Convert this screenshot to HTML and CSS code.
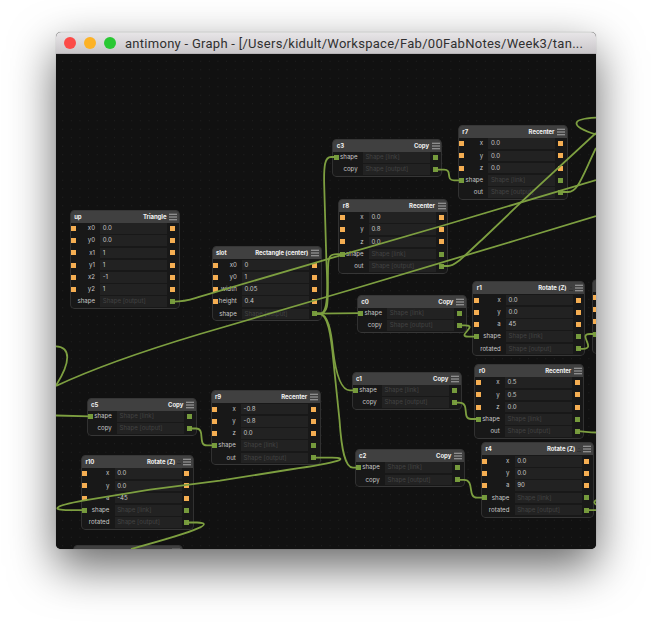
FILE: index.html
```html
<!DOCTYPE html>
<html lang="en">
<head>
<meta charset="utf-8">
<title>antimony - Graph</title>
<link rel="stylesheet" href="styles.css">
</head>
<body>
<main class="window">
  <header class="titlebar">
    <span class="light red"></span><span class="light yellow"></span><span class="light green"></span>
    <h1 class="title">antimony - Graph - [/Users/kidult/Workspace/Fab/00FabNotes/Week3/tan...</h1>
  </header>
  <section class="canvas" id="canvas">
    <svg class="wires" viewBox="56 54 540 495" width="540" height="495">
      <path d="M172.5 301.7C185 302 192 299 200 296.7L320 261.3L450 223.5L596 180"/>
      <path d="M56 386C90 370 140 352 200 334L350 290L517 240L596 216"/>
      <path d="M56 346.3C71 347 71 362 56 385.5"/>
      <path d="M560.3 192H568C578 192 582 177 596 148"/>
      <path d="M596 117.7C570 119 570 126 596 134.5"/>
      <path d="M440.7 266H448C456 266 467 253 481.7 240L521.7 201.7L596 133"/>
      <path d="M434.8 169.6H444C453 169.6 445 180.3 454 180.3H461.3"/>
      <path d="M314.8 313.7H320C328 313.7 328 292 326.3 258L324.2 185C323.7 165 325 157 331 157H335.5"/>
      <path d="M314.8 313.7H319C330 313.7 327.5 300 328 270C328 256 330 254.2 337 254.2H341.5"/>
      <path d="M314.8 313.7L360 313.2"/>
      <path d="M314.8 313.7H319C328 314 331 330 333 350C336 375 341 390.4 350 390.4H354.7"/>
      <path d="M314.8 313.7H319C328 314 331 335 333.5 362L339.5 420C341.5 450 345 467.7 353 467.7H357.7"/>
      <path d="M459.3 325.3H465C479 325.3 456 336.6 468 336.6H475.5"/>
      <path d="M577.8 348.8H583C597 348.8 577 334 590 334H595"/>
      <path d="M454 402.7H459C471 402.7 461 419 471 419H478"/>
      <path d="M577 431.2C584 431.2 588 432.5 596 432.5"/>
      <path d="M457 479.8H464C475 479.8 467 497.7 477 497.7H484.3"/>
      <path d="M586.5 510.2H596M597 500C593 501 594 504 597 505"/>
      <path d="M56 415.5L89.8 416.3"/>
      <path d="M189 428.5H196C206 428.5 197 445.4 207 445.4H213.8"/>
      <path d="M313 457.7H332C349 458 343 462 290 469.5L220 480.7L150 489.7L83 500.7C54 506 50 510 69 510.2H84"/>
      <path d="M186.3 522.5H197C213 523 205 529 131 549"/>
    </svg>
  </section>
</main>
<script src="graph.js"></script>
</body>
</html>
```
FILE: styles.css
```css
* { box-sizing: border-box; }
body { margin: 0; background: #fff; height: 629px; overflow: hidden; font-family: Inter, "Liberation Sans", sans-serif; }
.window { width: 540px; height: 517px; margin: 32px 0 0 56px; display: flow-root; border-radius: 5px; overflow: hidden; background: #111; box-shadow: 0 0 1px rgba(0,0,0,.4), 0 18px 46px rgba(0,0,0,.6); }
.titlebar { height: 22px; display: flex; align-items: center; padding-left: 8px; background: linear-gradient(#e7e5e7, #cac7ca); border-top: 1px solid #d9dad9; border-bottom: 1px solid #b5b2b5; }
.light { width: 12px; height: 12px; border-radius: 50%; margin-right: 8px; flex: none; }
.red { background: #fc4b48; }
.yellow { background: #fdb226; }
.green { background: #29c833; }
.title { margin: 2px 0 0 1px; font: 400 13px/20px Roboto, Inter, sans-serif; color: #303030; white-space: nowrap; letter-spacing: .28px; }
.canvas { position: relative; height: 495px; overflow: hidden; background: #111 radial-gradient(circle at 50% 50%, #222 0, #1d1d1d .5px, transparent .9px) 2.4px 3px / 8.63px 8.5px; }
.wires { position: absolute; inset: 0; z-index: 2; fill: none; stroke: #7d9f40; stroke-width: 1.8; }
.node { position: absolute; width: 108px; border-radius: 3.5px; background: #181818; box-shadow: 0 0 0 .9px #363636; padding-bottom: .3px; }
.node.wide { width: 111px; }
.head { height: 12px; padding: 0 1.8px 0 3.5px; display: flex; align-items: center; background: #404040; border-radius: 3px 3px 0 0; color: #f0f0f0; font-size: 6px; line-height: 12px; font-weight: 700; letter-spacing: -.07px; white-space: nowrap; }
.kind { margin-left: auto; }
.axis { width: 6px; height: 5px; margin-left: 1px; fill: #303030; }
.menu { width: 8px; height: 8px; margin-left: 2.5px; stroke: #a8a8a8; stroke-width: 1.1; }
.wide .menu { margin-left: 1px; }
.row { height: 12.2px; display: flex; align-items: center; padding: 0 3.5px 0 .3px; font-size: 6.1px; line-height: 10.6px; color: #c8c8c8; }
.port { width: 5px; height: 5px; flex: none; background: #f5ae52; }
.port.link { background: #759a3c; }
.port.none { visibility: hidden; }
.label { width: 19px; margin-right: 5.4px; display: flex; justify-content: flex-end; white-space: nowrap; }
.wide .label { width: 22.2px; }
.field { width: 67px; height: 10.6px; background: #222; padding-left: 2.4px; white-space: nowrap; }
.field.ghost { color: #434343; }
.row .port:last-child { margin-left: auto; }
```
FILE: graph.js
```javascript
const LINK = "Shape [link]", OUT = "Shape [output]";
const copy = [["shape", LINK], ["copy", OUT]];
const move = (x, y, z) => [["x", x], ["y", y], ["z", z], ["shape", LINK], ["out", OUT]];
const turn = a => [["x", "0.0"], ["y", "0.0"], ["a", a], ["shape", LINK], ["rotated", OUT]];

// left, top, name, kind, rows
const nodes = [
  [14.7, 156.5, "up", "Triangle", [["x0", "0.0"], ["y0", "0.0"], ["x1", "1"], ["y1", "1"], ["x2", "-1"], ["y2", "1"], ["shape", OUT]]],
  [156.5, 193, "slot", "Rectangle (center)", [["x0", "0"], ["y0", "1"], ["width", "0.05"], ["height", "0.4"], ["shape", OUT]]],
  [277.3, 85.5, "c3", "Copy", copy],
  [283.3, 145.5, "r8", "Recenter", move("0.0", "0.8", "0.0")],
  [402.8, 71.7, "r7", "Recenter", move("0.0", "0.0", "0.0")],
  [301.7, 241.5, "c0", "Copy", copy],
  [417.3, 228, "r1", "Rotate (Z)", turn("45")],
  [296.5, 318.5, "c1", "Copy", copy],
  [419.4, 310.6, "r0", "Recenter", move("0.5", "0.5", "0.0")],
  [299.5, 395.7, "c2", "Copy", copy],
  [425.9, 389.3, "r4", "Rotate (Z)", turn("90")],
  [155.5, 337, "r9", "Recenter", move("-0.8", "-0.8", "0.0")],
  [31.5, 344.5, "c5", "Copy", copy],
  [25.9, 401.7, "r10", "Rotate (Z)", turn("-45")],
  [536.6, 225.5, "", "", [["", ""], ["", ""], ["", ""], ["", LINK], ["", OUT]]],
  [18, 491.5, "", "", []]
];

const canvas = document.getElementById("canvas");
for (const [x, y, name, kind, rows] of nodes) {
  const wide = kind.startsWith("Rotate");
  const el = document.createElement("article");
  el.className = wide ? "node wide" : "node";
  el.style.left = x + "px";
  el.style.top = y + "px";
  const axis = wide ? '<svg class="axis" viewBox="0 0 6 5"><path d="M1 4h4v1H1zM2.5 1h1v1h-1z"/></svg>' : "";
  const menu = '<svg class="menu" viewBox="0 0 8 8"><path d="M0 1.3h8M0 4h8M0 6.7h8"/></svg>';
  el.innerHTML = `<div class="head"><span>${name}</span><span class="kind">${kind}</span>${axis}${menu}</div>` + rows.map(([label, value]) => {
    const link = value === LINK || value === OUT;
    const color = link ? " link" : "";
    const left = value === OUT ? " none" : color;
    const text = label ? value : "";
    return `<div class="row"><i class="port${left}"></i><span class="label">${label}</span>` +
      `<span class="field${link ? " ghost" : ""}">${text}</span><i class="port${color}"></i></div>`;
  }).join("");
  canvas.append(el);
}
```
